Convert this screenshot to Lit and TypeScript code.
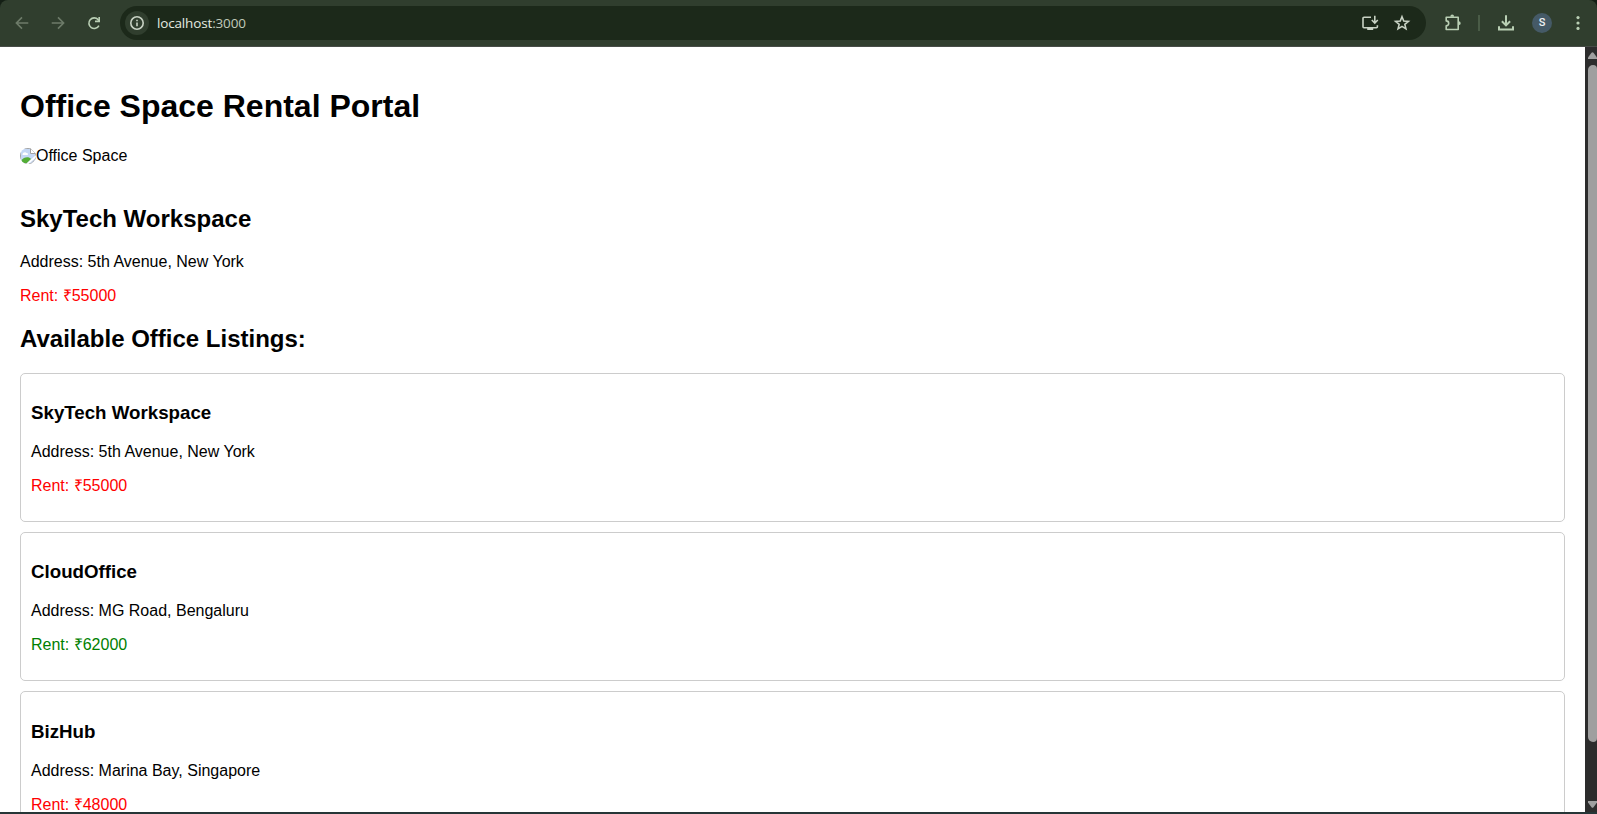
import { LitElement, html, css, svg } from "lit";
import { customElement, property } from "lit/decorators.js";

interface Office {
  name: string;
  address: string;
  rent: number;
}

const offices: Office[] = [
  { name: "SkyTech Workspace", address: "5th Avenue, New York", rent: 55000 },
  { name: "CloudOffice", address: "MG Road, Bengaluru", rent: 62000 },
  { name: "BizHub", address: "Marina Bay, Singapore", rent: 48000 },
];

const glyphs = {
  back: svg`<path d="M14.3 8H2.6M8 2.4 2.4 8 8 13.6" />`,
  forward: svg`<path d="M1.7 8h11.7M8 2.4 13.6 8 8 13.6" />`,
  reload: svg`<path d="M12.9 10.6A5.3 5.3 0 1 1 12.1 4.6L13.6 6" /><path d="M13.2 2v4.4H9" />`,
  info: svg`<circle cx="8" cy="8" r="6.2" /><path d="M8 7.4v3.8M8 4.7v1.5" />`,
  install: svg`<path d="M9 2.2H2a1 1 0 0 0-1 1v8.6a1 1 0 0 0 1 1h12.4a1 1 0 0 0 1-1V10.2" /><path d="M12.8.8v7M9.8 5l3 3 3-3" /><path d="M5.2 14h6" stroke-width="2" />`,
  star: svg`<path d="M8 1.7 9.75 6l4.65.35-3.55 3 1.1 4.5L8 11.4l-3.95 2.45 1.1-4.5-3.55-3L6.25 6Z" />`,
  puzzle: svg`<path d="M2.2 2.2h12v12.3h-12v-3.6a2.5 2.5 0 0 0 0-5Z" stroke-linejoin="round" /><path d="M6.3 1.8a1.9 2.3 0 0 1 3.8 0ZM14.6 6.3a2.1 1.9 0 0 1 0 3.8Z" fill="currentColor" stroke="none" />`,
  download: svg`<path d="M8 .3v10M3.9 6.3 8 10.4l4.1-4.1M1 11.2v3.3h14v-3.3" />`,
  menu: svg`<g fill="currentColor" stroke="none"><circle cx="8" cy="2.6" r="1.6" /><circle cx="8" cy="8" r="1.6" /><circle cx="8" cy="13.4" r="1.6" /></g>`,
};

const icon = (name: keyof typeof glyphs, cls = "") =>
  html`<svg class="icon ${cls}" viewBox="0 0 16 16" aria-hidden="true">${glyphs[name]}</svg>`;

@customElement("browser-bar")
export class BrowserBar extends LitElement {
  static styles = css`
    :host {
      display: block;
      background: #141f15;
    }
    .bar {
      box-sizing: border-box;
      height: 47px;
      display: flex;
      align-items: center;
      padding: 0 11px 1px 14px;
      background: #303e2e;
      border-bottom: 1px solid #474c47;
      border-radius: 8px 8px 0 0;
      color: #b9cfb4;
    }
    .icon {
      display: block;
      flex: none;
      width: 16px;
      height: 16px;
      fill: none;
      stroke: currentColor;
      stroke-width: 1.6;
      overflow: visible;
    }
    .nav {
      display: flex;
      gap: 20px;
      margin-right: 18px;
    }
    .dim {
      color: #6d7b69;
    }
    .bold {
      stroke-width: 2;
    }
    .omnibox {
      flex: 1;
      box-sizing: border-box;
      height: 34px;
      display: flex;
      align-items: center;
      padding: 0 16px 0 5px;
      border-radius: 17px;
      background: #1c291a;
      color: #c8d2c4;
    }
    .site {
      width: 24px;
      height: 24px;
      display: grid;
      place-items: center;
      border-radius: 50%;
      background: #303e2e;
    }
    .url {
      flex: 1;
      margin-left: 8px;
      font: 13.5px/18px "Open Sans", "Noto Sans", sans-serif;
      letter-spacing: -0.16px;
      color: #e4ebe0;
    }
    .port {
      color: #c0cabb;
    }
    .actions {
      display: flex;
      gap: 16px;
    }
    .tools {
      display: flex;
      align-items: center;
      margin-left: 18px;
    }
    .rule {
      width: 2px;
      height: 16px;
      margin: 0 18px 0 18px;
      background: #4a5c47;
    }
    .avatar {
      width: 20px;
      height: 20px;
      margin: 0 18px;
      border-radius: 50%;
      background: #455a67;
      color: #f0f3f5;
      font: 500 11px/20px Roboto, sans-serif;
      text-align: center;
    }
  `;

  render() {
    return html`<header class="bar">
      <nav class="nav">
        ${icon("back", "dim")} ${icon("forward", "dim")} ${icon("reload")}
      </nav>
      <div class="omnibox">
        <span class="site">${icon("info")}</span>
        <span class="url">localhost<span class="port">:3000</span></span>
        <div class="actions">${icon("install")} ${icon("star")}</div>
      </div>
      <div class="tools">
        ${icon("puzzle")}
        <span class="rule"></span>
        ${icon("download", "bold")}
        <span class="avatar">S</span>
        ${icon("menu")}
      </div>
    </header>`;
  }
}

@customElement("office-details")
export class OfficeDetails extends LitElement {
  @property({ attribute: false }) office!: Office;

  static styles = css`
    :host {
      display: block;
    }
    .line {
      margin: 0 0 16px;
      line-height: 18px;
    }
    .low {
      color: red;
    }
    .high {
      color: green;
    }
  `;

  render() {
    const { address, rent } = this.office;
    return html`<p class="line">Address: ${address}</p>
      <p class="line ${rent < 60000 ? "low" : "high"}">Rent: ₹${rent}</p>`;
  }
}

@customElement("app-root")
export class AppRoot extends LitElement {
  static styles = css`
    :host {
      box-sizing: border-box;
      display: flex;
      flex-direction: column;
      height: 100vh;
      overflow: hidden;
      background: #fff;
      border-bottom: 2px solid #263637;
    }
    .view {
      flex: 1;
      min-height: 0;
      display: flex;
    }
    .page {
      flex: 1;
      box-sizing: border-box;
      overflow: hidden;
      padding: 41px 20px 0;
      font: 16px/18px "Liberation Sans", Arial, sans-serif;
      color: #000;
    }
    .title {
      margin: 0 0 22px;
      font-size: 32px;
      line-height: 37px;
    }
    .photo {
      display: flex;
      align-items: center;
      height: 18px;
      margin-bottom: 40px;
    }
    .broken {
      width: 16px;
      height: 16px;
      border-radius: 8px;
    }
    .heading {
      margin: 0 0 21px;
      font-size: 24px;
      line-height: 27px;
    }
    .listings {
      margin-top: 20px;
    }
    .cards {
      display: flex;
      flex-direction: column;
      gap: 10px;
    }
    .card {
      box-sizing: border-box;
      height: 149.2px;
      flex: none;
      padding: 28.2px 10px 0;
      border: 1px solid #ccc;
      border-radius: 5px;
    }
    .name {
      margin: 0 0 19.55px;
      font-size: 18.72px;
      line-height: 21.5px;
    }
    .scroll {
      width: 12px;
      flex: none;
      display: flex;
      flex-direction: column;
      align-items: flex-end;
      background: #2c2c2c;
      overflow: hidden;
    }
    .arrow {
      display: block;
      flex: none;
      width: 9px;
      height: 7px;
      margin: 5px 0 6px;
      fill: #9f9f9f;
    }
    .thumb {
      width: 9px;
      height: 677px;
      border-radius: 5px 4px 4px 5px;
      background: #9f9f9f;
    }
    .down {
      margin: auto 0 4px;
    }
  `;

  render() {
    const featured = offices[0];
    return html`<browser-bar></browser-bar>
      <div class="view">
        <main class="page">
          <h1 class="title">Office Space Rental Portal</h1>
          <div class="photo">
            <svg class="broken" viewBox="0 0 16 16" aria-hidden="true">
              <path d="M.5.5h10l5 5v10H.5Z" fill="#c5d8f5" stroke="#a2a2a2" />
              <path d="M2.5 6.5c0-2 3-3 4-1.5 1.6-.2 2 1.5 1 2h-5Z" fill="#fff" />
              <path d="M1 15v-2C4 8.500 9 8.500 11 11l-4 4Z" fill="#54ad36" />
              <path d="M16 7v2.500L8.500 16H6L16 7Z" fill="#fff" />
              <path d="M10.500.5v5h5" fill="#fff" stroke="#a2a2a2" />
              <path d="M16 10v6h-6" fill="#b8b8b8" />
            </svg>
            <span>Office Space</span>
          </div>
          <h2 class="heading">${featured.name}</h2>
          <office-details .office=${featured}></office-details>
          <h2 class="heading listings">Available Office Listings:</h2>
          <section class="cards">
            ${offices.map(
              (o) => html`<article class="card">
                <h3 class="name">${o.name}</h3>
                <office-details .office=${o}></office-details>
              </article>`
            )}
          </section>
        </main>
        <div class="scroll">
          <svg class="arrow" viewBox="0 0 9 7"><path d="M0 7V5.500L3.500.8Q4.500-.3 5.500.8L9 5.500V7Z" /></svg>
          <div class="thumb"></div>
          <svg class="arrow down" viewBox="0 0 9 7"><path d="M0 0v1.500l3.500 4.700q1 1.100 2 0L9 1.500V0Z" /></svg>
        </div>
      </div>`;
  }
}
